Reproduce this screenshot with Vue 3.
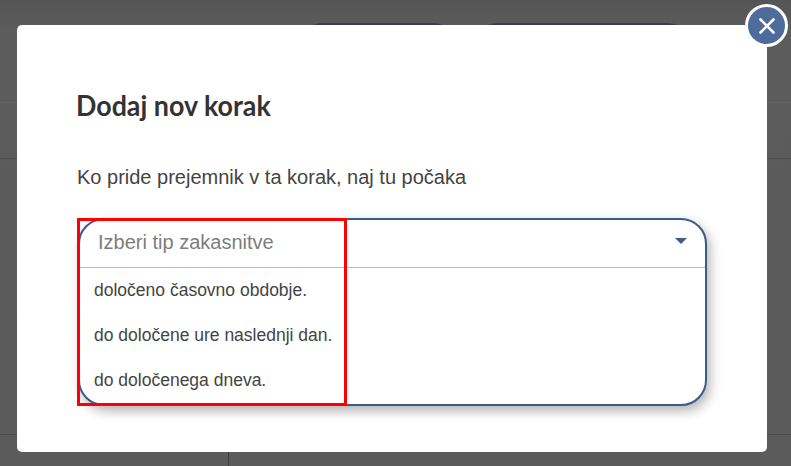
<script setup>
const options = ['določeno časovno obdobje.', 'do določene ure naslednji dan.', 'do določenega dneva.']
</script>

<template>
  <div class="page">
    <div class="behind">
      <div class="top">
        <span class="pill first"></span>
        <span class="pill second"></span>
      </div>
      <div class="band"></div>
      <div class="body">
        <div class="side"></div>
      </div>
      <div class="foot">
        <div class="foot-side"></div>
      </div>
    </div>

    <div class="modal">
      <h1>Dodaj nov korak</h1>
      <p>Ko pride prejemnik v ta korak, naj tu počaka</p>
      <div class="select-wrap">
        <div class="select">
          <div class="head">
            <span class="placeholder">Izberi tip zakasnitve</span>
            <span class="caret"></span>
          </div>
          <ul>
            <li v-for="o in options" :key="o">{{ o }}</li>
          </ul>
        </div>
        <div class="mark"></div>
      </div>
    </div>

    <button class="close" aria-label="Zapri">
      <svg width="18" height="18" viewBox="0 0 18 18">
        <path d="M2.5 2.5L15.5 15.5M15.5 2.5L2.5 15.5" stroke="#fff" stroke-width="2.6" fill="none" stroke-linecap="round" />
      </svg>
    </button>
  </div>
</template>

<style>
html, body { margin: 0; padding: 0; background: #5a5a5a; }
</style>

<style scoped>
.page {
  position: relative;
  width: 791px;
  height: 466px;
  overflow: hidden;
  font-family: "Liberation Sans", Arial, sans-serif;
  background: linear-gradient(#555555, #5c5c5c 30px, #5b5b5b);
}
.behind { display: flex; flex-direction: column; height: 466px; }
.top {
  height: 103px;
  box-sizing: border-box;
  border-bottom: 1px solid #636363;
  display: flex;
  padding: 23px 0 0 302px;
  gap: 23px;
}
.pill { height: 40px; border-radius: 20px; background: #3a3d4a; }
.first { width: 152px; }
.second { width: 211px; }
.band { height: 56px; box-sizing: border-box; border-bottom: 1px solid #4d4d4d; }
.body { height: 276px; box-sizing: border-box; border-bottom: 1px solid #4d4d4d; }
.side { width: 228px; }
.foot { flex: 1; }
.foot-side { width: 228px; height: 100%; border-right: 1px solid #404040; }

.modal {
  position: absolute;
  left: 17px;
  top: 25px;
  width: 750px;
  height: 427px;
  box-sizing: border-box;
  padding: 63px 60px 0;
  background: #fff;
  border-radius: 5px;
}
h1 {
  margin: 0 0 0 -1px;
  font-family: Lato, sans-serif;
  font-size: 29px;
  line-height: 34px;
  font-weight: 700;
  color: #333;
  transform: scaleX(0.925);
  transform-origin: left center;
}
p {
  margin: 42px 0 0;
  font-size: 20px;
  line-height: 26px;
  color: #444;
}
.select-wrap { position: relative; margin-top: 28px; }
.select {
  box-sizing: border-box;
  width: 629px;
  height: 188px;
  margin-left: 1px;
  border: 2px solid #3e5a8a;
  border-radius: 26px;
  background: #fff;
  box-shadow: 3px 5px 12px rgba(0, 0, 0, 0.3);
  overflow: hidden;
}
.head {
  height: 48px;
  box-sizing: border-box;
  border-bottom: 1px solid #bbb;
  display: flex;
  align-items: center;
  justify-content: space-between;
  padding: 0 18px 0 18px;
}
.placeholder { font-size: 20px; line-height: 42px; margin-bottom: 4px; color: #7d7d7d; }
.caret {
  width: 0;
  height: 0;
  margin-top: -6px;
  border-left: 6px solid transparent;
  border-right: 6px solid transparent;
  border-top: 6px solid #3e5a8a;
}
ul { margin: 0; padding: 0; list-style: none; }
li {
  height: 45px;
  line-height: 45px;
  padding-left: 14px;
  font-size: 17.5px;
  color: #444;
}
.mark {
  position: absolute;
  left: 0;
  top: 0;
  width: 270px;
  height: 188px;
  box-sizing: border-box;
  border: 3px solid #f00;
}
.close {
  position: absolute;
  left: 745px;
  top: 4px;
  width: 43px;
  height: 43px;
  box-sizing: border-box;
  padding: 0;
  border: 3px solid #fff;
  border-radius: 50%;
  background: #4d6c9c;
  display: flex;
  align-items: center;
  justify-content: center;
}
</style>
